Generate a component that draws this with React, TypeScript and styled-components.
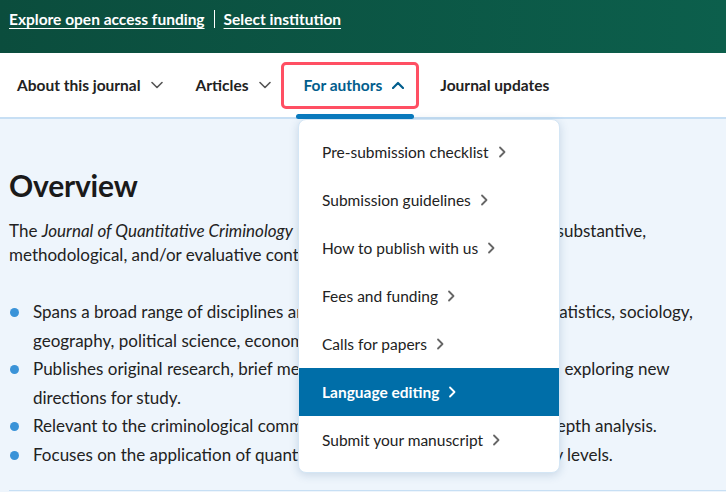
import React from 'react';
import styled, { createGlobalStyle } from 'styled-components';

const MENU = [
  'Pre-submission checklist',
  'Submission guidelines',
  'How to publish with us',
  'Fees and funding',
  'Calls for papers',
  'Language editing',
  'Submit your manuscript',
];

const BULLETS = [
  'Spans a broad range of disciplines and fields such as criminology, art, statistics, sociology, geography, political science, economics, and public policy.',
  'Publishes original research, brief methodological notes, and key articles exploring new directions for study.',
  'Relevant to the criminological community through its emphasis on in-depth analysis.',
  'Focuses on the application of quantitative method at local and at policy levels.',
];

const GlobalStyle = createGlobalStyle`
  body {
    margin: 0;
    font-family: Lato, "Noto Sans", sans-serif;
    color: #222222;
    background: #eef5fc;
  }
`;

const Page = styled.div`
  width: 726px;
  height: 492px;
  overflow: hidden;
  display: flex;
  flex-direction: column;
`;

const TopBar = styled.div`
  height: 53px;
  background: linear-gradient(90deg, #0b4d3d 0%, #0c5f4c 100%);
  display: flex;
  align-items: center;
  padding: 0 9px 15px;
  gap: 9px;
  box-sizing: border-box;
`;

const TopLink = styled.a`
  color: #ffffff;
  font-weight: 700;
  font-size: 15.5px;
  text-decoration: underline;
  text-underline-offset: 3px;
  text-decoration-thickness: 1px;
`;

const Divider = styled.span`
  width: 1px;
  height: 18px;
  background: #ffffff;
`;

const Nav = styled.nav`
  height: 64px;
  background: #ffffff;
  border-bottom: 2px solid #c7dff4;
  display: flex;
  align-items: center;
  padding-left: 17px;
`;

const NavItem = styled.div<{ $active?: boolean; $gap?: number }>`
  position: relative;
  display: flex;
  align-items: center;
  gap: 10px;
  height: 47px;
  box-sizing: border-box;
  font-weight: 700;
  font-size: 15.5px;
  color: ${(p) => (p.$active ? '#025e8d' : '#222222')};
  margin-right: ${(p) => p.$gap ?? 36}px;
  margin-left: ${(p) => (p.$active ? '-26px' : '0')};
  padding: ${(p) => (p.$active ? '0 12px 0 20px' : '0')};
  border: ${(p) => (p.$active ? '3px solid #ff4f63' : 'none')};
  border-radius: 5px;
`;

const ActiveBar = styled.span`
  position: absolute;
  left: 12px;
  right: 2px;
  bottom: -13px;
  height: 5px;
  border-radius: 3px;
  background: #0a7bbf;
`;

const Chevron = ({ up, color }: { up?: boolean; color: string }) => (
  <svg width="12" height="8" viewBox="0 0 12 8" fill="none">
    <path
      d={up ? 'M1 7 L6 2 L11 7' : 'M1 1.5 L6 6.5 L11 1.5'}
      stroke={color}
      strokeWidth={up ? 2.2 : 1.6}
      strokeLinecap="round"
      strokeLinejoin="round"
    />
  </svg>
);

const Main = styled.main`
  position: relative;
  flex: 1;
  padding-left: 9px;
`;

const Heading = styled.h1`
  margin: 48px 0 16px;
  font-size: 30px;
  font-weight: 700;
  letter-spacing: -0.2px;
  color: #1a1a1a;
`;

const Para = styled.p`
  margin: 0 0 31px;
  font-size: 17px;
  line-height: 24px;
  width: 700px;
`;

const List = styled.ul`
  margin: 0;
  padding: 0 0 21px;
  list-style: none;
  border-bottom: 1px solid #c7dff4;
`;

const Bullet = styled.li`
  position: relative;
  padding: 0 8px 0 24px;
  font-size: 17px;
  line-height: 28.5px;
  &::before {
    content: '';
    position: absolute;
    left: 1px;
    top: 10px;
    width: 9px;
    height: 9px;
    border-radius: 50%;
    background: #3a93d8;
  }
`;

const Menu = styled.div`
  position: absolute;
  top: 0;
  left: 298px;
  width: 262px;
  padding: 8px 0;
  background: #ffffff;
  border-radius: 8px;
  box-shadow: 0 2px 10px rgba(30, 80, 130, 0.18);
  border: 1px solid #d4e6f5;
  box-sizing: border-box;
`;

const MenuItem = styled.div<{ $active?: boolean }>`
  height: 48px;
  display: flex;
  align-items: center;
  gap: 9px;
  padding-left: 23px;
  font-size: 15.5px;
  font-weight: ${(p) => (p.$active ? 700 : 400)};
  color: ${(p) => (p.$active ? '#ffffff' : '#222222')};
  background: ${(p) => (p.$active ? '#006ea8' : 'transparent')};
`;

const Arrow = ({ color }: { color: string }) => (
  <svg width="8" height="12" viewBox="0 0 8 12" fill="none">
    <path d="M2 1.5 L6.5 6 L2 10.5" stroke={color} strokeWidth="1.8" strokeLinecap="round" strokeLinejoin="round" />
  </svg>
);

export default function App() {
  return (
    <Page>
      <GlobalStyle />
      <TopBar>
        <TopLink>Explore open access funding</TopLink>
        <Divider />
        <TopLink>Select institution</TopLink>
      </TopBar>
      <Nav>
        <NavItem $gap={33}>
          About this journal <Chevron color="#555" />
        </NavItem>
        <NavItem>
          Articles <Chevron color="#555" />
        </NavItem>
        <NavItem $active $gap={21}>
          For authors <Chevron up color="#025e8d" />
          <ActiveBar />
        </NavItem>
        <NavItem>Journal updates</NavItem>
      </Nav>
      <Main>
        <Heading>Overview</Heading>
        <Para>
          The <i>Journal of Quantitative Criminology</i> publishes high quality, original and substantive,
          methodological, and/or evaluative contributions.
        </Para>
        <List>
          {BULLETS.map((b) => (
            <Bullet key={b}>{b}</Bullet>
          ))}
        </List>
        <Menu>
          {MENU.map((m) => {
            const active = m === 'Language editing';
            return (
              <MenuItem key={m} $active={active}>
                {m}
                <Arrow color={active ? '#ffffff' : '#666666'} />
              </MenuItem>
            );
          })}
        </Menu>
      </Main>
    </Page>
  );
}
